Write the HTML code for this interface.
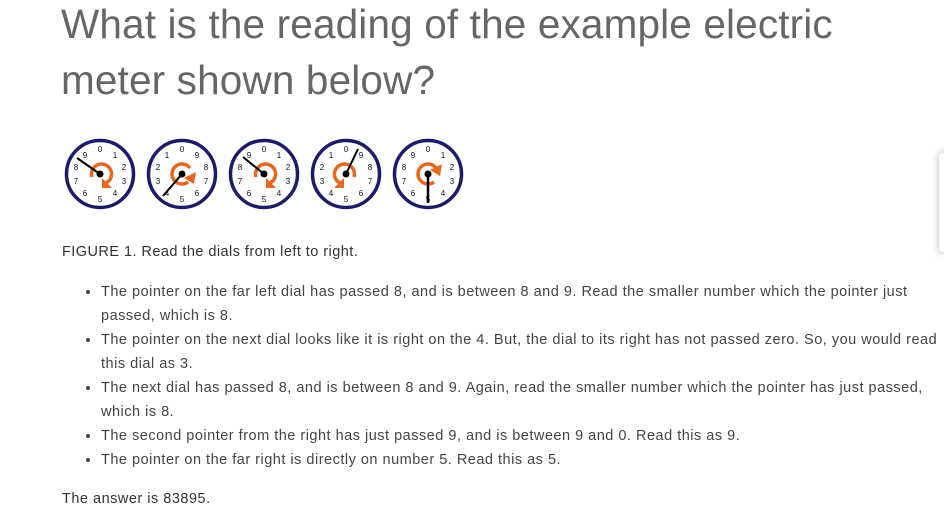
<!DOCTYPE html>
<html><head><meta charset="utf-8"><style>
body{margin:0;width:944px;height:515px;background:#fff;overflow:hidden;position:relative;font-family:"Liberation Sans",Arial,sans-serif;}
h1{position:absolute;left:61px;top:-4px;margin:0;font-weight:normal;font-size:40.5px;line-height:56px;color:#666;width:820px;letter-spacing:0.15px;}
.fig{position:absolute;left:62px;top:244px;font-size:14.5px;color:#333;letter-spacing:0.45px;}
ul{position:absolute;left:62px;top:280px;margin:0;padding:0 0 0 39px;width:860px;font-size:14.5px;line-height:24px;color:#444;white-space:nowrap;letter-spacing:0.5px;}
ul li{margin:0;padding:0;}
.ans{position:absolute;left:62px;top:491px;font-size:14.5px;color:#333;letter-spacing:0.5px;}
.box{position:absolute;left:939px;top:153px;width:20px;height:99px;background:#fff;border-radius:4px;box-shadow:0 0 8px rgba(0,0,0,.3);}
</style></head><body>
<h1>What is the reading of the example electric meter shown below?</h1>
<svg style="position:absolute;left:0;top:0" width="500" height="230" font-family="Liberation Sans,Arial" font-size="8" fill="#111" text-anchor="middle">
<defs>
<g id="d"><circle r="33.5" fill="#fff" stroke="#1c1a6b" stroke-width="3.5"/></g>
</defs>
<g transform="translate(100,174)"><use href="#d"/>
<text x="0" y="-22">0</text><text x="15" y="-16">1</text><text x="24" y="-4">2</text><text x="24" y="10">3</text><text x="15" y="22">4</text><text x="0" y="28">5</text><text x="-15" y="22">6</text><text x="-24" y="10">7</text><text x="-24" y="-4">8</text><text x="-15" y="-16">9</text>
<path d="M-8,3 A10,10 0 1 1 6,9" fill="none" stroke="#e8671c" stroke-width="3.5"/><path d="M2,4 L12,14 L2,14Z" fill="#e8671c"/>
<line x1="0" y1="0" x2="-23" y2="-16" stroke="#000" stroke-width="2"/><circle r="3.5" fill="#000"/></g>
<g transform="translate(182,174)"><use href="#d"/>
<text x="0" y="-22">0</text><text x="-15" y="-16">1</text><text x="-24" y="-4">2</text><text x="-24" y="10">3</text><text x="-15" y="22">4</text><text x="0" y="28">5</text><text x="15" y="22">6</text><text x="24" y="10">7</text><text x="24" y="-4">8</text><text x="15" y="-16">9</text>
<path d="M8,-6 A10,10 0 1 0 6,8" fill="none" stroke="#e8671c" stroke-width="3.5"/><path d="M2,4 L14,-2 L12,10Z" fill="#e8671c"/>
<line x1="0" y1="0" x2="-19" y2="22" stroke="#000" stroke-width="2"/><circle r="3.5" fill="#000"/></g>
<g transform="translate(264,174)"><use href="#d"/>
<text x="0" y="-22">0</text><text x="15" y="-16">1</text><text x="24" y="-4">2</text><text x="24" y="10">3</text><text x="15" y="22">4</text><text x="0" y="28">5</text><text x="-15" y="22">6</text><text x="-24" y="10">7</text><text x="-24" y="-4">8</text><text x="-15" y="-16">9</text>
<path d="M-8,3 A10,10 0 1 1 6,9" fill="none" stroke="#e8671c" stroke-width="3.5"/><path d="M2,4 L12,14 L2,14Z" fill="#e8671c"/>
<line x1="0" y1="0" x2="-21" y2="-17" stroke="#000" stroke-width="2"/><circle r="3.5" fill="#000"/></g>
<g transform="translate(346,174)"><use href="#d"/>
<text x="0" y="-22">0</text><text x="-15" y="-16">1</text><text x="-24" y="-4">2</text><text x="-24" y="10">3</text><text x="-15" y="22">4</text><text x="0" y="28">5</text><text x="15" y="22">6</text><text x="24" y="10">7</text><text x="24" y="-4">8</text><text x="15" y="-16">9</text>
<path d="M8,3 A10,10 0 1 0 -6,9" fill="none" stroke="#e8671c" stroke-width="3.5"/><path d="M-2,4 L-12,14 L-2,14Z" fill="#e8671c"/>
<line x1="0" y1="0" x2="12" y2="-25" stroke="#000" stroke-width="2"/><circle r="3.5" fill="#000"/></g>
<g transform="translate(428,174)"><use href="#d"/>
<text x="0" y="-22">0</text><text x="15" y="-16">1</text><text x="24" y="-4">2</text><text x="24" y="10">3</text><text x="15" y="22">4</text><text x="0" y="28">5</text><text x="-15" y="22">6</text><text x="-24" y="10">7</text><text x="-24" y="-4">8</text><text x="-15" y="-16">9</text>
<path d="M6,8 A10,10 0 1 1 8,-6" fill="none" stroke="#e8671c" stroke-width="3.5"/><path d="M2,-4 L14,-10 L12,2Z" fill="#e8671c"/>
<line x1="0" y1="0" x2="0" y2="29" stroke="#000" stroke-width="2.5"/><circle r="3.5" fill="#000"/></g>
</svg>
<div class="fig">FIGURE 1. Read the dials from left to right.</div>
<ul>
<li>The pointer on the far left dial has passed 8, and is between 8 and 9. Read the smaller number which the pointer just<br>passed, which is 8.</li>
<li>The pointer on the next dial looks like it is right on the 4. But, the dial to its right has not passed zero. So, you would read<br>this dial as 3.</li>
<li>The next dial has passed 8, and is between 8 and 9. Again, read the smaller number which the pointer has just passed,<br>which is 8.</li>
<li>The second pointer from the right has just passed 9, and is between 9 and 0. Read this as 9.</li>
<li>The pointer on the far right is directly on number 5. Read this as 5.</li>
</ul>
<div class="ans">The answer is 83895.</div>
<div class="box"></div>
</body></html>
